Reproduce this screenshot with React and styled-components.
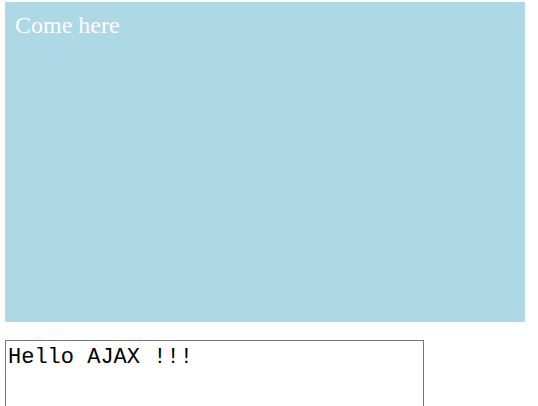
import React from 'react';
import styled, { createGlobalStyle } from 'styled-components';

const Global = createGlobalStyle`
  body {
    margin: 0;
    background: #fff;
    font-family: "Liberation Serif", "Times New Roman", serif;
  }
`;

const Page = styled.div`
  padding: 2px 5px 0;
`;

const Panel = styled.div`
  box-sizing: border-box;
  width: 520px;
  height: 320px;
  padding: 10px 10px;
  background-color: lightblue;
  color: white;
  font-size: 24px;
`;

const Output = styled.textarea`
  display: block;
  box-sizing: border-box;
  width: 419px;
  height: 66px;
  margin-top: 18px;
  padding: 4px 2px 2px;
  border: 1px solid #767676;
  border-bottom: none;
  resize: none;
  overflow: hidden;
  font-family: "Liberation Mono", "Courier New", monospace;
  font-size: 22px;
  color: #000;
  outline: none;
`;

function App() {
  return (
    <Page>
      <Global />
      <Panel>Come here</Panel>
      <Output defaultValue="Hello AJAX !!!" />
    </Page>
  );
}

export default App;
